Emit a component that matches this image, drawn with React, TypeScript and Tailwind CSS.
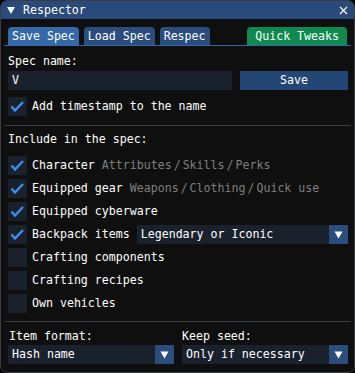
import React from "react";

function Check({ on }: { on: boolean }) {
  return (
    <div className="h-[19px] w-[19px] shrink-0 bg-[#19212d]">
      {on && (
        <svg width="19" height="19" viewBox="0 0 19 19">
          <path d="M3.5 9.5 L7 13.5 L15 5" fill="none" stroke="#3d8ef0" strokeWidth="2.4" strokeLinecap="butt" strokeLinejoin="miter" />
        </svg>
      )}
    </div>
  );
}

function Arrow() {
  return (
    <div className="flex h-[19px] w-[19px] shrink-0 items-center justify-center bg-[#2b4d7e]">
      <svg width="9" height="8" viewBox="0 0 9 8">
        <path d="M0.5 0.5 H8.5 L4.5 7.5 Z" fill="#ffffff" />
      </svg>
    </div>
  );
}

function Combo({ value, className }: { value: string; className: string }) {
  return (
    <div className={"flex h-[19px] items-center bg-[#19212d] " + className}>
      <span className="flex-1 pl-[4px] leading-[19px]">{value}</span>
      <Arrow />
    </div>
  );
}

function Sep() {
  return <div className="-ml-[4px] -mr-[3px] h-px bg-[#3c3c44]" />;
}

function Row({ on, label, children }: { on: boolean; label: string; children?: React.ReactNode }) {
  return (
    <div className="flex h-[19px] items-center">
      <Check on={on} />
      <span className="ml-[5px] whitespace-pre leading-[19px]">{label}</span>
      {children}
    </div>
  );
}

function Hint({ parts }: { parts: string[] }) {
  return (
    <div className="ml-[7px] flex items-center text-[#7f7f7f]">
      {parts.map((p, i) => (
        <React.Fragment key={i}>
          {i > 0 && <span className="mx-[2px] leading-[19px]">/</span>}
          <span className="leading-[19px]">{p}</span>
        </React.Fragment>
      ))}
    </div>
  );
}

export default function App() {
  return (
    <div className="h-[373px] w-[355px] overflow-hidden bg-black">
      <div className="flex h-[373px] w-[355px] flex-col overflow-hidden rounded-[7px] border border-[#3c3c44] bg-[#0f0f0f] font-['DejaVu_Sans_Mono',monospace] text-[11.6px] leading-[13px] text-white">
        {/* title bar */}
        <div className="flex h-[18px] shrink-0 items-center bg-[#294a7a] pl-[6px] pr-[6px]">
          <svg width="8" height="7" viewBox="0 0 8 7">
            <path d="M0 0 H8 L4 7 Z" fill="#ffffff" />
          </svg>
          <span className="ml-[8px] flex-1 leading-[18px]">Respector</span>
          <svg width="9" height="9" viewBox="0 0 9 9">
            <path d="M1 1 L8 8 M8 1 L1 8" stroke="#ffffff" strokeWidth="1.2" />
          </svg>
        </div>

        <div className="flex flex-col pl-[7px] pr-[6px]">
          {/* tabs */}
          <div className="mt-[8px] flex h-[18px] items-end">
            <div className="h-[18px] rounded-t-[4px] bg-[#3468a8] px-[4px] leading-[18px]">Save Spec</div>
            <div className="ml-[5px] h-[18px] rounded-t-[4px] bg-[#2b4d7e] px-[4px] leading-[18px]">Load Spec</div>
            <div className="ml-[5px] h-[18px] rounded-t-[4px] bg-[#2b4d7e] px-[4px] leading-[18px]">Respec</div>
            <div className="ml-auto mr-[1px] h-[18px] rounded-t-[4px] bg-[#0e8a4f] px-[8px] leading-[18px]">Quick Tweaks</div>
          </div>
          <div className="-ml-[4px] -mr-[3px] h-px bg-[#3468a8]" />

          <div className="mt-[9px] h-[13px]">Spec name:</div>
          <div className="mt-[3px] flex h-[19px] gap-[8px]">
            <div className="w-[224px] bg-[#19212d] pl-[4px] leading-[19px]">V</div>
            <div className="flex-1 bg-[#244677] text-center leading-[19px]">Save</div>
          </div>
          <div className="mt-[7px]">
            <Row on label="Add timestamp to the name" />
          </div>

          <div className="mt-[9px]">
            <Sep />
          </div>

          <div className="mt-[7px] h-[13px]">Include in the spec:</div>
          <div className="mt-[10px] flex flex-col gap-[4px]">
            <Row on label="Character">
              <Hint parts={["Attributes", "Skills", "Perks"]} />
            </Row>
            <Row on label="Equipped gear">
              <Hint parts={["Weapons", "Clothing", "Quick use"]} />
            </Row>
            <Row on label="Equipped cyberware" />
            <Row on label="Backpack items">
              <Combo value="Legendary or Iconic" className="ml-[7px] flex-1" />
            </Row>
            <Row on={false} label="Crafting components" />
            <Row on={false} label="Crafting recipes" />
            <Row on={false} label="Own vehicles" />
          </div>

          <div className="mt-[8px]">
            <Sep />
          </div>

          <div className="mt-[8px] grid grid-cols-2 gap-x-[8px]">
            <div className="h-[13px] pl-[1px]">Item format:</div>
            <div className="h-[13px]">Keep seed:</div>
            <Combo value="Hash name" className="mt-[2px]" />
            <Combo value="Only if necessary" className="mt-[2px]" />
          </div>
        </div>
      </div>
    </div>
  );
}
